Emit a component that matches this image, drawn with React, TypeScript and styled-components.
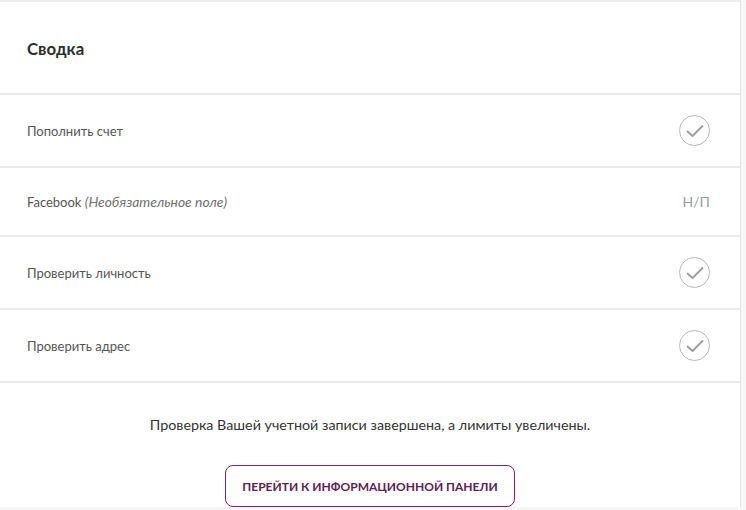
import React from 'react'
import styled, { createGlobalStyle } from 'styled-components'

const GlobalStyle = createGlobalStyle`
  html, body {
    margin: 0;
    padding: 0;
    background: #f7f7f7;
  }
  body {
    font-family: Lato, 'Noto Sans', sans-serif;
    -webkit-font-smoothing: antialiased;
  }
`

const Card = styled.div`
  width: 741px;
  background: #fff;
  border-top: 2px solid #ededed;
  border-right: 1px solid #e4e4e4;
  box-sizing: border-box;
`

const Header = styled.div`
  height: 91px;
  display: flex;
  align-items: center;
  padding: 0 27px;
  border-bottom: 2px solid #ebebeb;
`

const Title = styled.h2`
  margin: 0 0 -1px;
  font-size: 16.8px;
  font-weight: 700;
  color: #2d2d2d;
`

const Row = styled.div`
  display: flex;
  align-items: center;
  justify-content: space-between;
  padding: 20px 30px 20px 27px;
  border-bottom: 2px solid #ebebeb;
`

const Label = styled.span`
  font-size: 13px;
  color: #555;
`

const Hint = styled.em`
  font-size: 13.9px;
  color: #6f6f6f;
  font-style: italic;
`

const CheckCircle = styled.span`
  width: 29px;
  height: 29px;
  border: 1px solid #b9b9b9;
  border-radius: 50%;
  display: flex;
  align-items: center;
  justify-content: center;
`

const NotApplicable = styled.span`
  font-size: 14px;
  line-height: 27px;
  color: #9a9ca2;
  letter-spacing: 0.1px;
`

const Footer = styled.div`
  display: flex;
  flex-direction: column;
  align-items: center;
  padding-top: 32px;
  gap: 30px;
`

const Message = styled.p`
  margin: 0;
  font-size: 14.3px;
  line-height: 20px;
  color: #333;
`

const DashboardButton = styled.button`
  height: 42px;
  padding: 0 16px;
  background: #fff;
  border: 1px solid #8a1d6c;
  border-radius: 8px;
  font-family: inherit;
  font-size: 12px;
  font-weight: 700;
  color: #5e2150;
  cursor: pointer;
`

const Check = () => (
  <CheckCircle>
    <svg width="18" height="14" viewBox="0 0 18 14" fill="none">
      <path d="M1.5 7.5 L6.5 12 L16.5 2" stroke="#9c9c9c" strokeWidth="1.8" strokeLinecap="round" strokeLinejoin="round" />
    </svg>
  </CheckCircle>
)

const steps = [
  { label: 'Пополнить счет', done: true },
  { label: 'Facebook', hint: '(Необязательное поле)', done: false },
  { label: 'Проверить личность', done: true },
  { label: 'Проверить адрес', done: true },
]

export default function App() {
  return (
    <>
      <GlobalStyle />
      <Card>
        <Header>
          <Title>Сводка</Title>
        </Header>
        {steps.map((step) => (
          <Row key={step.label}>
            <Label>
              {step.label}
              {step.hint && <> <Hint>{step.hint}</Hint></>}
            </Label>
            {step.done ? <Check /> : <NotApplicable>Н/П</NotApplicable>}
          </Row>
        ))}
        <Footer>
          <Message>Проверка Вашей учетной записи завершена, а лимиты увеличены.</Message>
          <DashboardButton>ПЕРЕЙТИ К ИНФОРМАЦИОННОЙ ПАНЕЛИ</DashboardButton>
        </Footer>
      </Card>
    </>
  )
}
